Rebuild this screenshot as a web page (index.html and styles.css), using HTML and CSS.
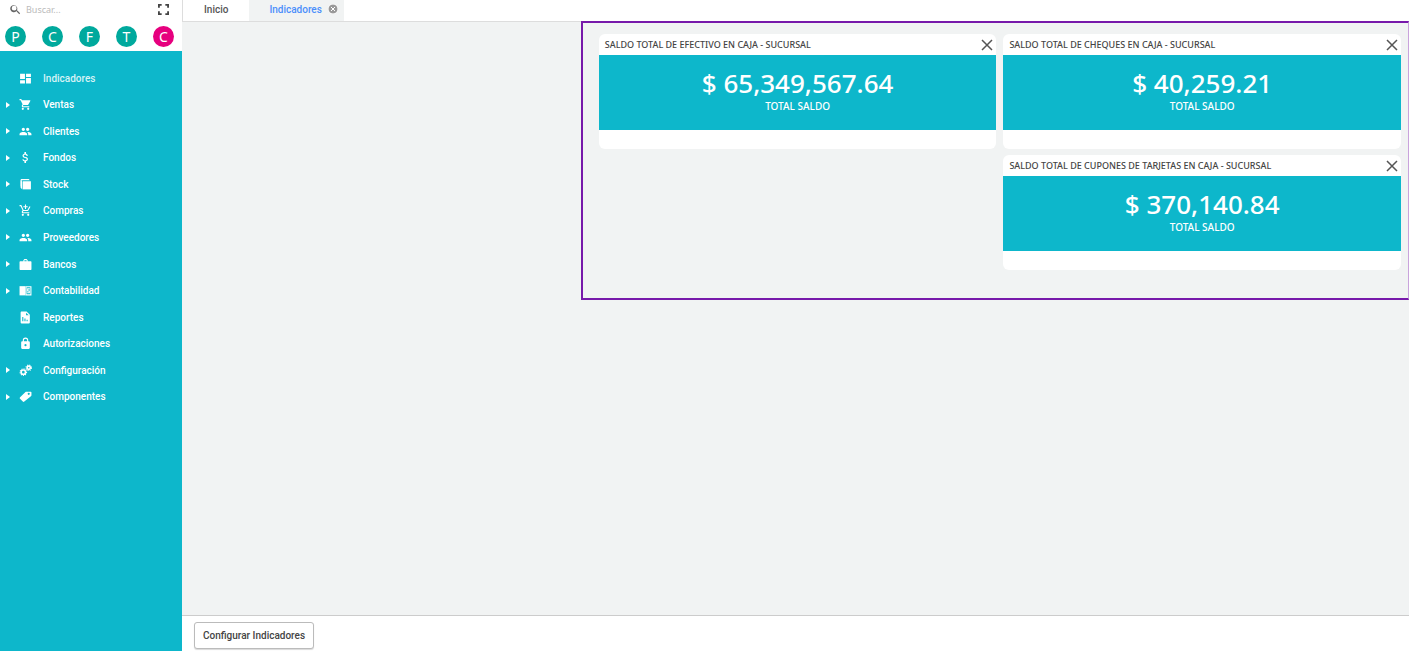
FILE: index.html
```html
<!DOCTYPE html>
<html lang="es">
<head>
<meta charset="UTF-8">
<meta name="viewport" content="width=device-width, initial-scale=1.0">
<title>Indicadores</title>
<link rel="stylesheet" href="styles.css">
</head>
<body>
  <div class="app">
    <aside class="sidebar">
      <div class="search">
        <svg class="search-icon" viewBox="0 0 24 24"><path d="M15.5 14h-.79l-.28-.27A6.5 6.5 0 1 0 13.73 14.71l.27.28v.79l5 4.99L20.49 19l-4.99-5zm-6 0a4.5 4.5 0 1 1 0-9 4.5 4.5 0 0 1 0 9z"/></svg>
        <input type="text" placeholder="Buscar..." aria-label="Buscar">
        <button type="button" class="expand" aria-label="Pantalla completa">
          <svg viewBox="0 0 12 12"><path d="M1 4V1h3M8 1h3v3M11 8v3H8M4 11H1V8"/></svg>
        </button>
      </div>
      <div class="shortcuts">
        <button type="button">P</button>
        <button type="button">C</button>
        <button type="button">F</button>
        <button type="button">T</button>
        <button type="button" class="pink">C</button>
      </div>
      <nav class="menu">
        <div class="menu-list">
          <a href="#" class="active">
            <svg viewBox="0 0 24 24"><path d="M2 13h9V3H2v10zm0 8h9v-6H2v6zm11 0h9V11h-9v10zm0-18v6h9V3h-9z"/></svg>
            Indicadores
          </a>
          <a href="#" class="parent">
            <svg viewBox="0 0 24 24"><path d="M7 18c-1.1 0-1.99.9-1.99 2S5.9 22 7 22s2-.9 2-2-.9-2-2-2zM1 2v2h2l3.6 7.59-1.35 2.45C4.52 15.37 5.48 17 7 17h12v-2H7.42c-.14 0-.25-.11-.25-.25l.03-.12.9-1.63h7.45c.75 0 1.41-.41 1.75-1.03l3.58-6.49A1 1 0 0 0 20 4H5.21l-.94-2H1zm16 16c-1.1 0-1.99.9-1.99 2s.89 2 1.99 2 2-.9 2-2-.9-2-2-2z"/></svg>
            Ventas
          </a>
          <a href="#" class="parent">
            <svg viewBox="0 0 24 24"><path d="M16 11c1.66 0 2.99-1.34 2.99-3S17.66 5 16 5s-3 1.34-3 3 1.34 3 3 3zm-8 0c1.66 0 2.99-1.34 2.99-3S9.66 5 8 5 5 6.34 5 8s1.34 3 3 3zm0 2c-2.33 0-7 1.17-7 3.5V19h14v-2.5C15 14.17 10.33 13 8 13zm8 0c-.29 0-.62.02-.97.05C16.19 13.89 17 15.02 17 16.5V19h6v-2.5c0-2.33-4.67-3.5-7-3.5z"/></svg>
            Clientes
          </a>
          <a href="#" class="parent">
            <svg viewBox="0 0 24 24"><path d="M11.8 10.9c-2.27-.59-3-1.2-3-2.15 0-1.09 1.01-1.85 2.7-1.85 1.78 0 2.44.85 2.5 2.1h2.21c-.07-1.72-1.12-3.3-3.21-3.81V2h-3v3.16c-1.94.42-3.5 1.68-3.5 3.61 0 2.31 1.91 3.46 4.7 4.13 2.5.6 3 1.48 3 2.41 0 .69-.49 1.79-2.7 1.79-2.06 0-2.87-.92-2.98-2.1H6.32c.12 2.19 1.76 3.42 3.68 3.83V22h3v-3.15c1.95-.37 3.5-1.5 3.5-3.55 0-2.84-2.43-3.81-4.7-4.4z"/></svg>
            Fondos
          </a>
          <a href="#" class="parent">
            <svg viewBox="0 0 24 24"><path d="M4 2h14l2 2H5v13l-2-2V3z"/><path d="M7 6h15v15H7z"/><path d="M3 4l3 3v14l-3-3z"/></svg>
            Stock
          </a>
          <a href="#" class="parent">
            <svg viewBox="0 0 24 24"><path d="M11 9h2V6h3V4h-3V1h-2v3H8v2h3v3zm-4 9c-1.1 0-1.99.9-1.99 2S5.9 22 7 22s2-.9 2-2-.9-2-2-2zm10 0c-1.1 0-1.99.9-1.99 2s.89 2 1.99 2 2-.9 2-2-.9-2-2-2zm-9.83-3.25l.03-.12.9-1.63h7.45c.75 0 1.41-.41 1.75-1.03l3.86-7.01L19.42 4l-1.1 2-2.76 5H8.53L4.27 2H1v2h2l3.6 7.59-1.35 2.45C4.52 15.37 5.48 17 7 17h12v-2H7.42c-.13 0-.25-.11-.25-.25z"/></svg>
            Compras
          </a>
          <a href="#" class="parent">
            <svg viewBox="0 0 24 24"><path d="M16 11c1.66 0 2.99-1.34 2.99-3S17.66 5 16 5s-3 1.34-3 3 1.34 3 3 3zm-8 0c1.66 0 2.99-1.34 2.99-3S9.66 5 8 5 5 6.34 5 8s1.34 3 3 3zm0 2c-2.33 0-7 1.17-7 3.5V19h14v-2.5C15 14.17 10.33 13 8 13zm8 0c-.29 0-.62.02-.97.05C16.19 13.89 17 15.02 17 16.5V19h6v-2.5c0-2.33-4.67-3.5-7-3.5z"/></svg>
            Proveedores
          </a>
          <a href="#" class="parent">
            <svg viewBox="0 0 24 24"><path fill-rule="evenodd" d="M22 6h-6V4l-2-2h-4L8 4v2H2L1 7v14l1 1h20l1-1V7zM10 4h4v2h-4z"/></svg>
            Bancos
          </a>
          <a href="#" class="parent">
            <svg viewBox="0 0 24 24"><path d="M1 4h11v17H1z"/><path fill-rule="evenodd" d="M12 4h11v17H12zm2 2v13h7V6z"/><path d="M15 8h5v2h-3v2h3v5h-5v-2h3v-1h-3z"/></svg>
            Contabilidad
          </a>
          <a href="#">
            <svg viewBox="0 0 24 24"><path fill-rule="evenodd" d="M5 1h9l6 6v14a2 2 0 0 1-2 2H5a2 2 0 0 1-2-2V3c0-1.1.9-2 2-2zm8 2v5h5zM6 11v8h2v-8zm4 3v5h2v-5zm4 2v3h2v-3z"/></svg>
            Reportes
          </a>
          <a href="#">
            <svg viewBox="0 0 24 24"><path fill-rule="evenodd" d="M18 8h-1V6A5 5 0 0 0 7 6v2H6a2 2 0 0 0-2 2v10c0 1.1.9 2 2 2h12a2 2 0 0 0 2-2V10a2 2 0 0 0-2-2zm-6 9a2 2 0 1 1 0-4 2 2 0 0 1 0 4zM9 8V6a3 3 0 0 1 6 0v2z"/></svg>
            Autorizaciones
          </a>
          <a href="#" class="parent">
            <svg viewBox="0 0 24 24"><g class="gear"><circle cx="8" cy="15" r="4"/><circle class="teeth" cx="8" cy="15" r="6"/><circle cx="18" cy="7" r="3"/><circle class="teeth" cx="18" cy="7" r="5"/></g></svg>
            Configuración
          </a>
          <a href="#" class="parent">
            <svg viewBox="0 0 24 24"><path fill-rule="evenodd" d="M22 3h-8c-1 0-1.5.3-2 .8L2 13.5c-1 1-1 1.8 0 2.8l5 5c1 1 1.8 1 2.8 0L22 11.5c.6-.6 1-1.2 1-2V4zM18 5a2 2 0 1 1 0 4 2 2 0 0 1 0-4z"/></svg>
            Componentes
          </a>
        </div>
      </nav>
    </aside>

    <main class="main">
      <div class="tabs">
        <a href="#" class="tab">Inicio</a>
        <div class="tab selected">
          <a href="#">Indicadores</a>
          <button type="button" aria-label="Cerrar pestaña">
            <svg viewBox="0 0 10 10"><circle cx="5" cy="5" r="5"/><path d="M3 3l4 4M7 3L3 7"/></svg>
          </button>
        </div>
      </div>

      <div class="content">
        <section class="board">
          <article class="card">
            <header>
              <h2>SALDO TOTAL DE EFECTIVO EN CAJA - SUCURSAL</h2>
              <button type="button" aria-label="Cerrar"><svg viewBox="0 0 12 12"><path d="M1 1l10 10M11 1L1 11"/></svg></button>
            </header>
            <div class="card-body">
              <p class="amount">$ 65,349,567.64</p>
              <p class="caption">TOTAL SALDO</p>
            </div>
          </article>
          <article class="card">
            <header>
              <h2>SALDO TOTAL DE CHEQUES EN CAJA - SUCURSAL</h2>
              <button type="button" aria-label="Cerrar"><svg viewBox="0 0 12 12"><path d="M1 1l10 10M11 1L1 11"/></svg></button>
            </header>
            <div class="card-body">
              <p class="amount">$ 40,259.21</p>
              <p class="caption">TOTAL SALDO</p>
            </div>
          </article>
          <article class="card right">
            <header>
              <h2>SALDO TOTAL DE CUPONES DE TARJETAS EN CAJA - SUCURSAL</h2>
              <button type="button" aria-label="Cerrar"><svg viewBox="0 0 12 12"><path d="M1 1l10 10M11 1L1 11"/></svg></button>
            </header>
            <div class="card-body">
              <p class="amount">$ 370,140.84</p>
              <p class="caption">TOTAL SALDO</p>
            </div>
          </article>
        </section>
      </div>

      <footer class="footer">
        <button type="button">Configurar Indicadores</button>
      </footer>
    </main>
  </div>
</body>
</html>
```
FILE: styles.css
```css
* {
  box-sizing: border-box;
}

body {
  margin: 0;
  padding: 0 2px 2px 0;
  height: 100vh;
  background-color: #fff;
  font-family: Roboto, Arial, sans-serif;
  font-size: 10px;
  font-weight: 500;
  color: #555;
}

h2, p {
  margin: 0;
}

a {
  color: inherit;
  text-decoration: none;
}

button {
  margin: 0;
  padding: 0;
  border: none;
  background: none;
  font: inherit;
  color: inherit;
  cursor: pointer;
}

svg {
  display: block;
}

.app {
  display: flex;
  height: 100%;
}

/* Barra lateral */
.sidebar {
  display: flex;
  flex-direction: column;
  flex: 0 0 182px;
}

.search {
  display: flex;
  align-items: center;
  height: 18px;
  padding: 0 13px 0 9px;
}

.search-icon {
  width: 13px;
  height: 13px;
  fill: #666;
}

.search input {
  flex: 1;
  min-width: 0;
  margin-left: 4px;
  padding: 0;
  border: none;
  outline: none;
  font-family: "Noto Sans", sans-serif;
  font-size: 9px;
}

.search input::placeholder {
  color: #bbb;
}

.expand svg {
  width: 11px;
  height: 11px;
  fill: none;
  stroke: #444;
  stroke-width: 2;
}

.shortcuts {
  display: flex;
  justify-content: space-between;
  align-items: center;
  height: 33px;
  padding: 3px 8px 0 5px;
}

.shortcuts button {
  width: 21px;
  height: 21px;
  border-radius: 50%;
  background-color: #00a99d;
  color: #fff;
  font-family: "Noto Sans", sans-serif;
  font-size: 14px;
  font-weight: 400;
  line-height: 21px;
}

.shortcuts .pink {
  background-color: #e6007e;
}

.menu {
  flex: 1;
  padding-top: 14px;
  background-color: #0db7cb;
  color: #fff;
}

.menu-list {
  display: grid;
  grid-auto-rows: 1fr;
  height: 345px;
}

.menu a {
  display: flex;
  align-items: center;
  padding-left: 19px;
}

.menu a.active {
  color: #d5f3f6;
}

.menu a.parent {
  padding-left: 6px;
}

/* Flecha de los menús desplegables */
.menu a.parent::before {
  content: "";
  margin-right: 9px;
  border: 3px solid transparent;
  border-left: 4px solid #fff;
  border-right-width: 0;
}

.menu svg {
  width: 13px;
  height: 13px;
  margin-right: 11px;
  fill: #fff;
}

.gear {
  fill: none;
  stroke: #fff;
  stroke-width: 3;
}

.gear .teeth {
  stroke-width: 2;
  stroke-dasharray: 2 2;
}

/* Contenido principal */
.main {
  display: flex;
  flex-direction: column;
  flex: 1;
  min-width: 0;
}

.tabs {
  display: flex;
  height: 22px;
  border-bottom: 1px solid #ddd;
  border-left: 1px solid #ddd;
}

.tab {
  display: flex;
  align-items: center;
  padding: 0 21px 3px;
}

.tab.selected {
  gap: 6px;
  padding: 0 6px 3px 20px;
  background-color: #f1f3f3;
  color: #4c8ffb;
}

.tab svg {
  width: 10px;
  height: 10px;
  fill: #999;
  stroke: #fff;
}

.content {
  flex: 1;
  background-color: #f1f3f3;
}

.board {
  display: grid;
  grid-template-columns: 1fr 1fr;
  gap: 6px 7px;
  width: 67.5%;
  margin: -1px 0 0 auto;
  padding: 11px 7px 28px 16px;
  border: 2px solid #7719aa;
  border-right: 1px solid #c9a3dc;
}

.card {
  padding-bottom: 19px;
  background-color: #fff;
  border-radius: 6px;
}

.card.right {
  grid-column: 2;
}

.card header {
  display: flex;
  justify-content: space-between;
  align-items: center;
  height: 21px;
  padding: 0 3px 0 6px;
}

.card h2 {
  font-family: "Noto Sans", sans-serif;
  font-size: 9px;
  font-weight: 500;
  color: #444;
}

.card header svg {
  width: 12px;
  height: 12px;
  stroke: #555;
  stroke-width: 1.5;
}

.card-body {
  height: 75px;
  padding-top: 14px;
  background-color: #0db7cb;
  color: #fff;
  font-family: "Noto Sans", sans-serif;
  text-align: center;
}

.amount {
  font-size: 26px;
  line-height: 29px;
}

.caption {
  font-size: 10px;
  line-height: 16px;
}

.footer {
  height: 36px;
  padding: 6px 12px;
  border-top: 1px solid #ccc;
}

.footer button {
  height: 27px;
  padding: 0 8px;
  border: 1px solid #bbb;
  border-radius: 3px;
  background-color: #fff;
  color: #444;
  box-shadow: 0 1px 1px rgba(0, 0, 0, 0.15);
}
```
